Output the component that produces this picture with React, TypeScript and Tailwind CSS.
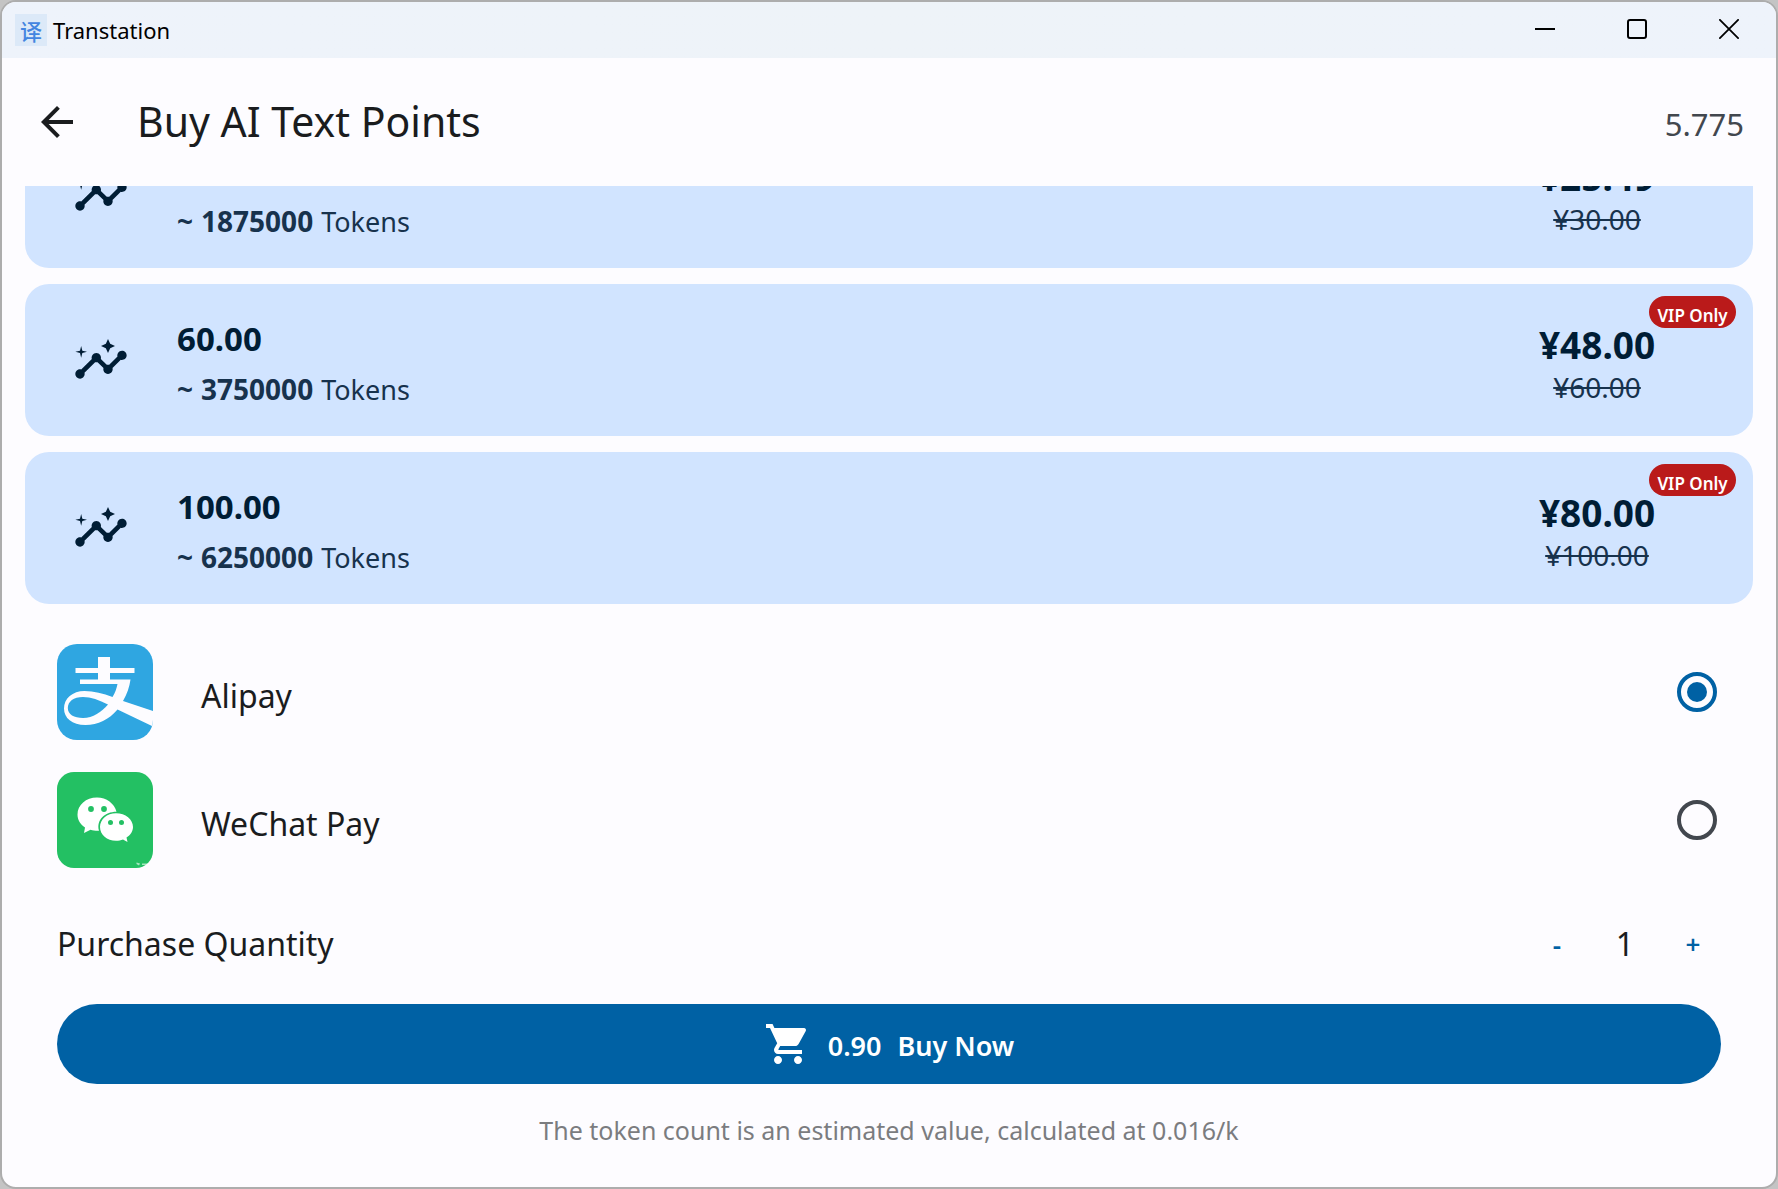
import { useState } from "react";
import { MdArrowBack, MdInsights, MdShoppingCart } from "react-icons/md";

type Pack = { points: string; tokens: string; price: string; original: string; vip?: boolean };

const packs: Pack[] = [
  { points: "30.00", tokens: "1875000", price: "¥25.49", original: "¥30.00" },
  { points: "60.00", tokens: "3750000", price: "¥48.00", original: "¥60.00", vip: true },
  { points: "100.00", tokens: "6250000", price: "¥80.00", original: "¥100.00", vip: true },
];

function TitleBar() {
  return (
    <div className="flex h-14 shrink-0 items-center bg-gradient-to-r from-[#eef3fb] via-[#eef3f8] to-[#eef3fb] pl-[13px]">
      <span className="flex size-8 items-center justify-center bg-[#dce9f8] font-['Noto_Sans_CJK_SC',sans-serif] text-[22px] leading-none font-medium text-[#4485e0]">
        译
      </span>
      <span className="pl-1.5 text-[22px] text-black">Transtation</span>
      <div className="ml-auto flex h-full items-center pr-px pb-0.5">
        <button aria-label="Minimize" className="flex h-full w-[92px] items-center justify-center">
          <svg width="20" height="20" viewBox="0 0 20 20" fill="none" stroke="black" strokeWidth="2">
            <path d="M0 10H20" />
          </svg>
        </button>
        <button aria-label="Maximize" className="flex h-full w-[92px] items-center justify-center">
          <svg width="20" height="20" viewBox="0 0 20 20" fill="none" stroke="black" strokeWidth="2">
            <rect x="1" y="1" width="18" height="18" rx="2" />
          </svg>
        </button>
        <button aria-label="Close" className="flex h-full w-[92px] items-center justify-center">
          <svg width="20" height="20" viewBox="0 0 20 20" fill="none" stroke="black" strokeWidth="1.8">
            <path d="M0.3 0.3L19.7 19.7M19.7 0.3L0.3 19.7" />
          </svg>
        </button>
      </div>
    </div>
  );
}

function PackCard({ pack }: { pack: Pack }) {
  return (
    <button className="relative flex h-[152px] w-full shrink-0 items-center rounded-3xl bg-[#d1e4ff] pr-[97px] pl-12 text-left">
      <MdInsights className="size-14 text-[#001d35]" />
      <span className="flex flex-col gap-2 pt-2 pl-12">
        <span className="text-[33px] leading-[42px] font-bold text-[#001d35]">{pack.points}</span>
        <span className="flex items-baseline gap-2 text-[27px] leading-[42px] text-[#17324d]">
          <b className="text-[28px]">~</b>
          <b className="text-[28px]">{pack.tokens}</b>
          <span>Tokens</span>
        </span>
      </span>
      <span className="ml-auto flex w-[118px] flex-col items-center pt-2.5">
        <span className="text-[37px] leading-[44px] font-bold text-[#001d35]">{pack.price}</span>
        <s className="text-[28px] leading-10 text-[#17324d]">{pack.original}</s>
      </span>
      {pack.vip && (
        <span className="absolute top-3 right-[17px] flex h-8 w-[87px] items-end justify-center rounded-full bg-[#ba1a1a] text-[17px] leading-6 font-semibold text-white">
          VIP Only
        </span>
      )}
    </button>
  );
}

function AlipayLogo() {
  return (
    <svg className="size-24" viewBox="0 0 96 96" aria-hidden="true">
      <defs>
        <clipPath id="alipay-tile">
          <rect width="96" height="96" rx="20" />
        </clipPath>
      </defs>
      <g clipPath="url(#alipay-tile)">
        <rect width="96" height="96" fill="#2fa6e1" />
        <g fill="#fdfcff">
          <path d="M41 13H53V24H77.500V29H53V35.500H73.500C72.500 43 70 50 66 57L96 67V82.500L60.500 65.500C52 75.500 41 81 28.500 81C15 81 7 74 7 64.500C7 54.500 15.500 47 27.500 47C37 47 46 49.500 55.500 53C58 49 59.700 44.500 60.500 40H23V35.500H41V29H18.500V24H41Z" />
        </g>
        <path d="M51 60.500C42 56 34 53 26 53C16.500 53 10.800 57.500 10.800 64C10.800 70.500 17 74 26 74C36 74 44.500 68 51 60.500Z" fill="#2fa6e1" />
      </g>
    </svg>
  );
}

function WeChatLogo() {
  return (
    <svg className="size-24" viewBox="0 0 96 96" aria-hidden="true">
      <rect width="96" height="96" rx="17" fill="#23c063" />
      <path d="M40 25.500C29 25.500 20.500 33 20.500 42.500C20.500 48 23.500 52.500 28 55.500L27 61L33.500 57.700C36 58.500 39 59 42 58.800C39 48 48 39.700 59.500 39.800C57.500 31.500 49.500 25.500 40 25.500Z" fill="white" />
      <path d="M59 41.200C50 41.200 43 47.300 43 55C43 62.700 50 68.800 59 68.800C61.500 68.800 64 68.300 66 67.500L70.500 70L69.500 65.500C73.500 63 76 59.300 76 55C76 47.300 68.500 41.200 59 41.200Z" fill="white" />
      <g fill="#23c063">
        <circle cx="34" cy="37" r="2.900" />
        <circle cx="47" cy="37" r="2.900" />
        <circle cx="53.500" cy="50.500" r="2.500" />
        <circle cx="64.500" cy="50.500" r="2.500" />
      </g>
      <path d="M79.500 90.500L83 91.500L82 93.500L79.500 92ZM85 91.500H92V93H85Z" fill="white" opacity="0.6" />
    </svg>
  );
}

export default function App() {
  const [method, setMethod] = useState("alipay");
  const [quantity, setQuantity] = useState(1);

  const methods = [
    { id: "alipay", label: "Alipay", logo: <AlipayLogo /> },
    { id: "wechat", label: "WeChat Pay", logo: <WeChatLogo /> },
  ];

  return (
    <div className="h-screen bg-[#c4c4c4] font-['Noto_Sans',sans-serif]">
      <div className="flex h-full flex-col overflow-hidden rounded-2xl border-2 border-[#adadad] bg-[#fdfcff] text-[#1a1c1e]">
        <TitleBar />
        <header className="flex h-32 shrink-0 items-center pr-8 pl-[31px]">
          <button aria-label="Back">
            <MdArrowBack className="size-12" />
          </button>
          <h1 className="pl-14 text-[41px]">Buy AI Text Points</h1>
          <span className="ml-auto pt-1 text-[31px] text-[#42474e]">5.775</span>
        </header>

        <main className="flex min-h-0 flex-1 flex-col">
          <section className="flex h-[418px] shrink-0 flex-col justify-end gap-4 overflow-hidden px-[23px]">
            {packs.map((pack) => (
              <PackCard key={pack.points} pack={pack} />
            ))}
          </section>

          <section className="flex flex-col gap-8 pt-10 pr-[59px] pl-[55px]">
            {methods.map(({ id, label, logo }) => (
              <label key={id} className="flex h-24 items-center">
                {logo}
                <span className="pt-2 pl-12 text-[32px]">{label}</span>
                <input
                  type="radio"
                  name="method"
                  value={id}
                  checked={method === id}
                  onChange={() => setMethod(id)}
                  className="ml-auto grid size-10 appearance-none place-items-center rounded-full border-4 border-[#42474e] before:size-5 before:rounded-full checked:border-[#0061a4] checked:before:bg-[#0061a4]"
                />
              </label>
            ))}
          </section>

          <section className="flex flex-col px-[55px] pt-10">
            <div className="flex h-[72px] items-center">
              <span id="quantity-label" className="text-[32px]">Purchase Quantity</span>
              <div role="group" aria-labelledby="quantity-label" className="ml-auto flex items-center">
                <button
                  aria-label="Decrease"
                  onClick={() => setQuantity(Math.max(1, quantity - 1))}
                  className="w-14 text-[26px] font-semibold text-[#0061a4]"
                >
                  -
                </button>
                <output className="w-20 text-center text-[32px]">{quantity}</output>
                <button
                  aria-label="Increase"
                  onClick={() => setQuantity(quantity + 1)}
                  className="w-14 text-[26px] font-semibold text-[#0061a4]"
                >
                  +
                </button>
              </div>
            </div>
            <button className="mt-6 flex h-20 items-center justify-center gap-4 rounded-full bg-[#0061a4] text-[27px] font-semibold text-white">
              <MdShoppingCart className="size-12" />
              <span className="flex gap-4 pt-1">
                <span>0.90</span>
                <span>Buy Now</span>
              </span>
            </button>
            <p className="pt-7 text-center text-[25px] leading-9 text-[#7b7c7f]">
              The token count is an estimated value, calculated at 0.016/k
            </p>
          </section>
        </main>
      </div>
    </div>
  );
}
